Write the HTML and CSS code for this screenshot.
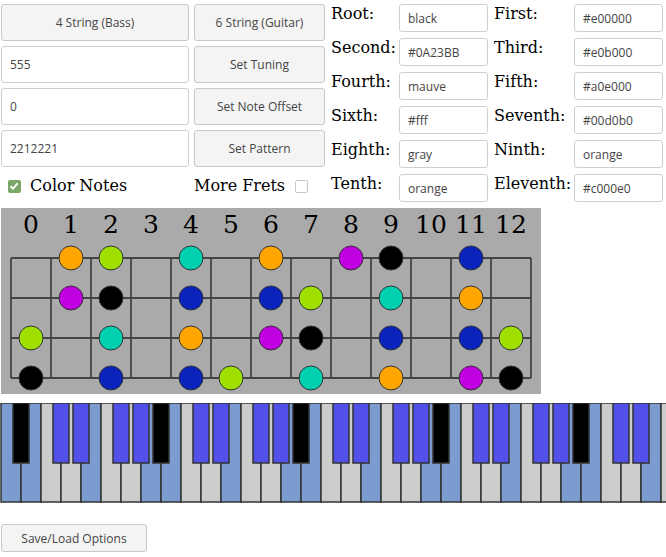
FILE: index.html
```html
<!DOCTYPE html>
<html>
<head>
<meta charset="utf-8">
<link rel="stylesheet" href="styles.css">
</head>
<body>
<div class="top">
  <div class="controls">
    <button class="btn">4 String (Bass)</button>
    <button class="btn">6 String (Guitar)</button>
    <input class="field" value="555">
    <button class="btn">Set Tuning</button>
    <input class="field" value="0">
    <button class="btn">Set Note Offset</button>
    <input class="field" value="2212221">
    <button class="btn">Set Pattern</button>
    <label class="check"><span class="box on"><svg width="12" height="12" viewBox="0 0 12 12"><path d="M2.5 6.2 L5 8.6 L9.6 3.4" class="tick"/></svg></span>Color Notes</label>
    <label class="check">More Frets<span class="box off"></span></label>
  </div>
  <div class="colors">
    <span class="lbl">Root:</span><input class="cfield" value="black"><span class="lbl lbl2">First:</span><input class="cfield" value="#e00000">
    <span class="lbl">Second:</span><input class="cfield" value="#0A23BB"><span class="lbl lbl2">Third:</span><input class="cfield" value="#e0b000">
    <span class="lbl">Fourth:</span><input class="cfield" value="mauve"><span class="lbl lbl2">Fifth:</span><input class="cfield" value="#a0e000">
    <span class="lbl">Sixth:</span><input class="cfield" value="#fff"><span class="lbl lbl2">Seventh:</span><input class="cfield" value="#00d0b0">
    <span class="lbl">Eighth:</span><input class="cfield" value="gray"><span class="lbl lbl2">Ninth:</span><input class="cfield" value="orange">
    <span class="lbl">Tenth:</span><input class="cfield" value="orange"><span class="lbl lbl2">Eleventh:</span><input class="cfield" value="#c000e0">
  </div>
</div>

<svg class="fretboard" width="540" height="186" viewBox="0 0 540 186">
  <rect width="540" height="186" class="fb-bg"/>
  <g class="fretnums">
    <text x="30" y="25">0</text><text x="70" y="25">1</text><text x="110" y="25">2</text><text x="150" y="25">3</text>
    <text x="190" y="25">4</text><text x="230" y="25">5</text><text x="270" y="25">6</text><text x="310" y="25">7</text>
    <text x="350" y="25">8</text><text x="390" y="25">9</text><text x="430" y="25">10</text><text x="470" y="25">11</text>
    <text x="510" y="25">12</text>
  </g>
  <path class="grid" d="M10 50H530M10 90H530M10 130H530M10 170H530M10 50V170M50 50V170M90 50V170M130 50V170M170 50V170M210 50V170M250 50V170M290 50V170M330 50V170M370 50V170M410 50V170M450 50V170M490 50V170M530 50V170"/>
  <g class="notes">
    <circle cx="70" cy="50" r="12" fill="#ffa500"/>
    <circle cx="110" cy="50" r="12" fill="#a0e000"/>
    <circle cx="190" cy="50" r="12" fill="#00d0b0"/>
    <circle cx="270" cy="50" r="12" fill="#ffa500"/>
    <circle cx="350" cy="50" r="12" fill="#c000e0"/>
    <circle cx="390" cy="50" r="12" fill="#000"/>
    <circle cx="470" cy="50" r="12" fill="#0a23bb"/>

    <circle cx="70" cy="90" r="12" fill="#c000e0"/>
    <circle cx="110" cy="90" r="12" fill="#000"/>
    <circle cx="190" cy="90" r="12" fill="#0a23bb"/>
    <circle cx="270" cy="90" r="12" fill="#0a23bb"/>
    <circle cx="310" cy="90" r="12" fill="#a0e000"/>
    <circle cx="390" cy="90" r="12" fill="#00d0b0"/>
    <circle cx="470" cy="90" r="12" fill="#ffa500"/>

    <circle cx="30" cy="130" r="12" fill="#a0e000"/>
    <circle cx="110" cy="130" r="12" fill="#00d0b0"/>
    <circle cx="190" cy="130" r="12" fill="#ffa500"/>
    <circle cx="270" cy="130" r="12" fill="#c000e0"/>
    <circle cx="310" cy="130" r="12" fill="#000"/>
    <circle cx="390" cy="130" r="12" fill="#0a23bb"/>
    <circle cx="470" cy="130" r="12" fill="#0a23bb"/>
    <circle cx="510" cy="130" r="12" fill="#a0e000"/>

    <circle cx="30" cy="170" r="12" fill="#000"/>
    <circle cx="110" cy="170" r="12" fill="#0a23bb"/>
    <circle cx="190" cy="170" r="12" fill="#0a23bb"/>
    <circle cx="230" cy="170" r="12" fill="#a0e000"/>
    <circle cx="310" cy="170" r="12" fill="#00d0b0"/>
    <circle cx="390" cy="170" r="12" fill="#ffa500"/>
    <circle cx="470" cy="170" r="12" fill="#c000e0"/>
    <circle cx="510" cy="170" r="12" fill="#000"/>
  </g>
</svg>

<svg class="piano" width="666" height="100" viewBox="0 0 666 100">
  <g class="keys">
    <rect class="wk hi" x="1" y="0" width="20" height="99"/>
    <rect class="wk hi" x="21" y="0" width="20" height="99"/>
    <rect class="wk" x="41" y="0" width="20" height="99"/>
    <rect class="wk" x="61" y="0" width="20" height="99"/>
    <rect class="wk hi" x="81" y="0" width="20" height="99"/>
    <rect class="wk" x="101" y="0" width="20" height="99"/>
    <rect class="wk" x="121" y="0" width="20" height="99"/>
    <rect class="wk hi" x="141" y="0" width="20" height="99"/>
    <rect class="wk hi" x="161" y="0" width="20" height="99"/>
    <rect class="wk" x="181" y="0" width="20" height="99"/>
    <rect class="wk" x="201" y="0" width="20" height="99"/>
    <rect class="wk hi" x="221" y="0" width="20" height="99"/>
    <rect class="wk" x="241" y="0" width="20" height="99"/>
    <rect class="wk" x="261" y="0" width="20" height="99"/>
    <rect class="wk hi" x="281" y="0" width="20" height="99"/>
    <rect class="wk hi" x="301" y="0" width="20" height="99"/>
    <rect class="wk" x="321" y="0" width="20" height="99"/>
    <rect class="wk" x="341" y="0" width="20" height="99"/>
    <rect class="wk hi" x="361" y="0" width="20" height="99"/>
    <rect class="wk" x="381" y="0" width="20" height="99"/>
    <rect class="wk" x="401" y="0" width="20" height="99"/>
    <rect class="wk hi" x="421" y="0" width="20" height="99"/>
    <rect class="wk hi" x="441" y="0" width="20" height="99"/>
    <rect class="wk" x="461" y="0" width="20" height="99"/>
    <rect class="wk" x="481" y="0" width="20" height="99"/>
    <rect class="wk hi" x="501" y="0" width="20" height="99"/>
    <rect class="wk" x="521" y="0" width="20" height="99"/>
    <rect class="wk" x="541" y="0" width="20" height="99"/>
    <rect class="wk hi" x="561" y="0" width="20" height="99"/>
    <rect class="wk hi" x="581" y="0" width="20" height="99"/>
    <rect class="wk" x="601" y="0" width="20" height="99"/>
    <rect class="wk" x="621" y="0" width="20" height="99"/>
    <rect class="wk hi" x="641" y="0" width="20" height="99"/>
    <rect class="wk" x="661" y="0" width="20" height="99"/>
  </g>
  <g class="blacks">
    <rect class="bk root" x="13" y="0" width="16" height="60"/>
    <rect class="bk" x="53" y="0" width="16" height="60"/>
    <rect class="bk" x="73" y="0" width="16" height="60"/>
    <rect class="bk" x="113" y="0" width="16" height="60"/>
    <rect class="bk" x="133" y="0" width="16" height="60"/>
    <rect class="bk root" x="153" y="0" width="16" height="60"/>
    <rect class="bk" x="193" y="0" width="16" height="60"/>
    <rect class="bk" x="213" y="0" width="16" height="60"/>
    <rect class="bk" x="253" y="0" width="16" height="60"/>
    <rect class="bk" x="273" y="0" width="16" height="60"/>
    <rect class="bk root" x="293" y="0" width="16" height="60"/>
    <rect class="bk" x="333" y="0" width="16" height="60"/>
    <rect class="bk" x="353" y="0" width="16" height="60"/>
    <rect class="bk" x="393" y="0" width="16" height="60"/>
    <rect class="bk" x="413" y="0" width="16" height="60"/>
    <rect class="bk root" x="433" y="0" width="16" height="60"/>
    <rect class="bk" x="473" y="0" width="16" height="60"/>
    <rect class="bk" x="493" y="0" width="16" height="60"/>
    <rect class="bk" x="533" y="0" width="16" height="60"/>
    <rect class="bk" x="553" y="0" width="16" height="60"/>
    <rect class="bk root" x="573" y="0" width="16" height="60"/>
    <rect class="bk" x="613" y="0" width="16" height="60"/>
    <rect class="bk" x="633" y="0" width="16" height="60"/>
  </g>
</svg>

<button class="btn save">Save/Load Options</button>
</body>
</html>
```

FILE: styles.css
```css
html, body {
  margin: 0;
  padding: 0;
  background: #fff;
}
body {
  font-family: "DejaVu Serif", serif;
  font-size: 16px;
  color: #000;
}
.top {
  display: flex;
  align-items: flex-start;
  height: 208px;
  padding-top: 4px;
  box-sizing: border-box;
}
.controls {
  margin-left: 1px;
  display: grid;
  grid-template-columns: 188px 131px;
  grid-template-rows: 37px 37px 37px 37px 26px;
  column-gap: 5px;
  row-gap: 5px;
}
.btn {
  font-family: "Open Sans", sans-serif;
  font-size: 12px;
  color: #454545;
  background: #f4f4f4;
  border: 1px solid #c8c8c8;
  border-radius: 3px;
  padding: 0;
  margin: 0;
}
.field, .cfield {
  font-family: "Open Sans", sans-serif;
  font-size: 12px;
  color: #444;
  background: #fff;
  border: 1px solid #cfcfcf;
  border-radius: 3px;
  padding: 0 8px;
  margin: 0;
  box-sizing: border-box;
  height: 100%;
  width: 100%;
}
.check {
  display: flex;
  align-items: center;
  padding-top: 4px;
  align-self: start;
  line-height: 20px;
}
.box {
  display: inline-block;
  width: 13px;
  height: 13px;
  box-sizing: border-box;
  border-radius: 2px;
}
.box.on {
  background: #7ca867;
  margin-left: 7px;
  margin-right: 9px;
}
.box.on svg { display: block; }
.tick {
  fill: none;
  stroke: #fff;
  stroke-width: 2;
}
.box.off {
  border: 1px solid #c8c8c8;
  background: #fff;
  margin-left: 10px;
}
.colors {
  margin-left: 6px;
  display: grid;
  grid-template-columns: 68px 89px 86px 89px;
  grid-auto-rows: 28px;
  row-gap: 6px;
}
.lbl {
  line-height: 20px;
  align-self: start;
  padding-top: 0;
}
.lbl2 {
  padding-left: 6px;
}
.cfield {
  height: 28px;
}
.fretboard {
  display: block;
  margin-left: 1px;
}
.fb-bg { fill: #aaaaaa; }
.fretnums {
  font-family: "DejaVu Serif", serif;
  font-size: 25px;
  text-anchor: middle;
  fill: #000;
}
.grid {
  fill: none;
  stroke: #444;
  stroke-width: 1.8;
}
.notes circle {
  stroke: #333;
  stroke-width: 1;
}
.piano {
  display: block;
  margin-top: 9px;
}
.wk {
  fill: #cccccc;
  stroke: #333;
  stroke-width: 1.5;
}
.wk.hi { fill: #7b9bd1; }
.bk {
  fill: #5151ea;
  stroke: #333;
  stroke-width: 1.5;
}
.bk.root { fill: #000; }
.btn.save {
  display: block;
  margin: 21px 0 0 1px;
  width: 146px;
  height: 28px;
}
```
